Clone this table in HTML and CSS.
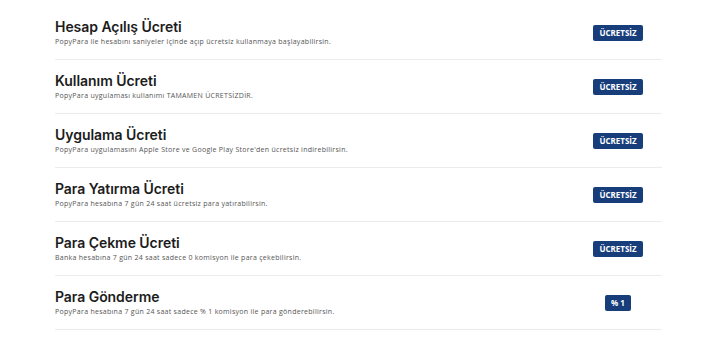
FILE: index.html
```html
<!DOCTYPE html>
<html lang="tr">
<head>
<meta charset="utf-8">
<link rel="stylesheet" href="styles.css">
</head>
<body>
<div class="list">
  <div class="row">
    <div class="info">
      <div class="title">Hesap Açılış Ücreti</div>
      <div class="desc">PopyPara ile hesabını saniyeler içinde açıp ücretsiz kullanmaya başlayabilirsin.</div>
    </div>
    <div class="price"><span class="badge">ÜCRETSİZ</span></div>
  </div>
  <div class="row">
    <div class="info">
      <div class="title">Kullanım Ücreti</div>
      <div class="desc">PopyPara uygulaması kullanımı TAMAMEN ÜCRETSİZDİR.</div>
    </div>
    <div class="price"><span class="badge">ÜCRETSİZ</span></div>
  </div>
  <div class="row">
    <div class="info">
      <div class="title">Uygulama Ücreti</div>
      <div class="desc">PopyPara uygulamasını Apple Store ve Google Play Store'den ücretsiz indirebilirsin.</div>
    </div>
    <div class="price"><span class="badge">ÜCRETSİZ</span></div>
  </div>
  <div class="row">
    <div class="info">
      <div class="title">Para Yatırma Ücreti</div>
      <div class="desc">PopyPara hesabına 7 gün 24 saat ücretsiz para yatırabilirsin.</div>
    </div>
    <div class="price"><span class="badge">ÜCRETSİZ</span></div>
  </div>
  <div class="row">
    <div class="info">
      <div class="title">Para Çekme Ücreti</div>
      <div class="desc">Banka hesabına 7 gün 24 saat sadece 0 komisyon ile para çekebilirsin.</div>
    </div>
    <div class="price"><span class="badge">ÜCRETSİZ</span></div>
  </div>
  <div class="row">
    <div class="info">
      <div class="title">Para Gönderme</div>
      <div class="desc">PopyPara hesabına 7 gün 24 saat sadece % 1 komisyon ile para gönderebilirsin.</div>
    </div>
    <div class="price"><span class="badge">% 1</span></div>
  </div>
</div>
</body>
</html>
```
FILE: styles.css
```css
html, body {
  margin: 0;
  padding: 0;
  background: #ffffff;
}
body {
  font-family: "Open Sans", "Liberation Sans", sans-serif;
  color: #222;
}
.list {
  margin: 6px 0 0 55px;
  width: 607px;
}
.row {
  display: flex;
  align-items: center;
  height: 53px;
  border-bottom: 1px solid #ececec;
}
.info {
  flex: 1;
  padding-top: 1px;
}
.title {
  font-family: "Inter", "Open Sans", sans-serif;
  font-weight: 600;
  font-size: 14px;
  line-height: 18px;
  color: #1c1c1c;
  letter-spacing: -0.05px;
}
.desc {
  font-size: 7px;
  line-height: 12px;
  color: #555555;
  margin-top: 0;
  letter-spacing: 0.28px;
}
.price {
  width: 88px;
  display: flex;
  justify-content: center;
}
.badge {
  display: inline-block;
  background: #173d7a;
  color: #fff;
  font-weight: 700;
  font-size: 8px;
  line-height: 16px;
  height: 16px;
  padding: 0 6.5px;
  border-radius: 2px;
  min-width: 13px;
  text-align: center;
}
```
